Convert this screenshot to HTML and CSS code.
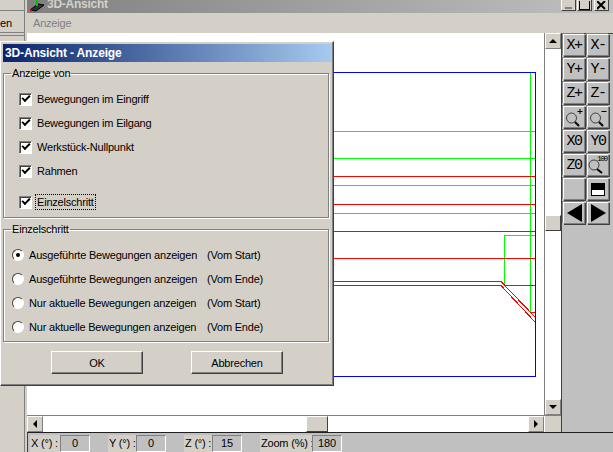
FILE: index.html

```html
<!DOCTYPE html>
<html lang="de">
<head>
  <meta charset="UTF-8" />
  <meta name="viewport" content="width=device-width, initial-scale=1.0" />
  <title>3D-Ansicht - Anzeige</title>
  <link rel="stylesheet" href="styles.css">
</head>
<body>
  <div class="desktop">
    <div class="side">
      <div class="side-menu">en</div>
    </div>

    <div class="win">
      <div class="win-title">
        <svg class="win-icon" width="16" height="12" viewBox="0 0 16 12">
          <path d="M1 10 L9 4 L15 5 L7 11 Z" fill="#303030" stroke="#000" />
          <path d="M8 0 V6" stroke="#00c000" stroke-width="2" />
          <path d="M1 10.5 H3" stroke="#f00" stroke-width="2" />
        </svg>
        <span class="win-name">3D-Ansicht</span>
        <div class="win-btns">
          <span class="win-btn"><i class="ico-min"></i></span>
          <span class="win-btn"><i class="ico-max"></i></span>
          <span class="win-btn win-close">
            <svg width="9" height="9" viewBox="0 0 9 9"><path d="M0 0 L8 8 M8 0 L0 8" stroke="#000" stroke-width="2" /></svg>
          </span>
        </div>
      </div>
      <div class="menu">Anzeige</div>

      <div class="work">
        <div class="view">
          <div class="view-top">
            <svg class="plot" width="517" height="382" viewBox="27 33 517 382" shape-rendering="crispEdges">
              <g stroke="#00ff00" fill="none">
                <path d="M27 131.5 H535" />
                <path d="M27 158.5 H535" />
                <path d="M27 185.5 H535" />
                <path d="M27 213.5 H535" />
                <path d="M530.5 72 V312" />
                <path d="M504.5 285 V235.5 H535" />
              </g>
              <g stroke="#ff0000" fill="none">
                <path d="M27 176.5 H535" />
                <path d="M27 204.5 H535" />
                <path d="M27 231.5 H535" />
                <path d="M27 258.5 H535" />
                <path d="M27 281.5 H501 L535 317" />
                <path d="M27 285.5 H501 L535 322" />
                <path d="M504 285.5 H535" />
                <path d="M530 312.5 H535" />
              </g>
              <rect x="27.5" y="72.5" width="508" height="304" fill="none" stroke="#0000ff" />
            </svg>
            <div class="vbar">
              <span class="sb-btn"><i class="arr arr-up"></i></span>
              <div class="sb-track sb-track-v"><span class="sb-thumb-v"></span></div>
              <span class="sb-btn"><i class="arr arr-down"></i></span>
            </div>
          </div>
          <div class="hbar">
            <span class="sb-btn"><i class="arr arr-left"></i></span>
            <div class="sb-track sb-track-h"><span class="sb-thumb-h"></span></div>
            <span class="sb-btn"><i class="arr arr-right"></i></span>
            <span class="sb-corner"></span>
          </div>
        </div>

        <div class="tools">
          <span class="tool">X+</span>
          <span class="tool">X-</span>
          <span class="tool">Y+</span>
          <span class="tool">Y-</span>
          <span class="tool">Z+</span>
          <span class="tool">Z-</span>
          <span class="tool">
            <svg width="20" height="20" viewBox="0 0 20 20" fill="none" stroke="#000">
              <circle cx="7.5" cy="11" r="5" stroke="#404040" />
              <path d="M11 15 L15 19" stroke-width="2" />
              <path d="M13.5 4.5 H18.5 M16 2 V7" />
            </svg>
          </span>
          <span class="tool">
            <svg width="20" height="20" viewBox="0 0 20 20" fill="none" stroke="#000">
              <circle cx="7.5" cy="11" r="5" stroke="#404040" />
              <path d="M11 15 L15 19" stroke-width="2" />
              <path d="M13.5 4.5 H18.5" />
            </svg>
          </span>
          <span class="tool">X0</span>
          <span class="tool">Y0</span>
          <span class="tool">Z0</span>
          <span class="tool">
            <svg width="20" height="20" viewBox="0 0 20 20" fill="none" stroke="#000">
              <circle cx="6" cy="10" r="5" stroke="#404040" />
              <path d="M9 14 L14 18" stroke-width="2" />
              <text class="tool-100" x="9" y="6" fill="#000" stroke="none">100</text>
            </svg>
          </span>
          <span class="tool"></span>
          <span class="tool"><i class="ico-half"></i></span>
          <span class="tool"><i class="tri tri-left"></i></span>
          <span class="tool"><i class="tri tri-right"></i></span>
        </div>
      </div>

      <div class="status">
        <span class="st-label st-x">X (°) :</span><span class="st-val">0</span>
        <span class="st-label st-y">Y (°) :</span><span class="st-val">0</span>
        <span class="st-label st-z">Z (°) :</span><span class="st-val">15</span>
        <span class="st-label st-zoom">Zoom (%) :</span><span class="st-val">180</span>
      </div>
    </div>

    <div class="dialog">
      <div class="dlg-title">3D-Ansicht - Anzeige</div>

      <fieldset class="group group-show">
        <legend>Anzeige von</legend>
        <div class="row"><span class="check"></span>Bewegungen im Eingriff</div>
        <div class="row"><span class="check"></span>Bewegungen im Eilgang</div>
        <div class="row"><span class="check"></span>Werkstück-Nullpunkt</div>
        <div class="row"><span class="check"></span>Rahmen</div>
        <div class="row row-single"><span class="check"></span><span class="focus">Einzelschritt</span></div>
      </fieldset>

      <fieldset class="group group-step">
        <legend>Einzelschritt</legend>
        <div class="row row-radio"><span class="radio radio-on"></span><span class="rlabel">Ausgeführte Bewegungen anzeigen</span>(Vom Start)</div>
        <div class="row row-radio"><span class="radio"></span><span class="rlabel">Ausgeführte Bewegungen anzeigen</span>(Vom Ende)</div>
        <div class="row row-radio"><span class="radio"></span><span class="rlabel">Nur aktuelle Bewegungen anzeigen</span>(Vom Start)</div>
        <div class="row row-radio"><span class="radio"></span><span class="rlabel">Nur aktuelle Bewegungen anzeigen</span>(Vom Ende)</div>
      </fieldset>

      <div class="dlg-btns">
        <span class="btn">OK</span>
        <span class="btn">Abbrechen</span>
      </div>
    </div>
  </div>
</body>
</html>
```

FILE: styles.css

```css
* {
  box-sizing: border-box;
}
html, body {
  margin: 0;
  height: 100%;
}
body {
  font-family: "Liberation Sans", Arial, sans-serif;
  font-size: 11px;
  letter-spacing: -0.2px;
  color: #000;
  background: #d4d0c8;
  overflow: hidden;
}
.desktop {
  position: relative;
  display: flex;
  width: 613px;
  height: 452px;
}

/* left sliver of the main window */
.side {
  width: 25px;
  margin-right: 2px;
  border-right: 1px solid #808080;
  flex: none;
}
.side-menu {
  height: 26px;
  margin-top: 10px;
  padding-top: 6px;
  border-top: 1px solid #808080;
  border-bottom: 4px double #808080;
}

/* 3D-Ansicht window */
.win {
  flex: 1;
  display: flex;
  flex-direction: column;
  min-width: 0;
}
.win-title {
  height: 13px;
  display: flex;
  align-items: flex-start;
  background: linear-gradient(to right, #808080, #c0c0c0);
  overflow: hidden;
  flex: none;
}
.win-icon {
  margin-left: 2px;
  flex: none;
}
.win-name {
  margin: -2px 0 0 2px;
  font-size: 12px;
  line-height: 12px;
  letter-spacing: -0.25px;
  font-weight: bold;
  color: #d4d0c8;
}
.win-btns {
  margin-left: auto;
  margin-right: 4px;
  display: flex;
  gap: 1px;
}
.win-btn {
  width: 15px;
  height: 11px;
  display: flex;
  align-items: flex-end;
  justify-content: center;
  background: #d4d0c8;
  border-right: 1px solid #404040;
  border-bottom: 1px solid #404040;
  border-left: 1px solid #fff;
}
.win-close {
  margin-left: 1px;
}
.win-close svg {
  display: block;
}
.ico-min {
  display: block;
  width: 7px;
  height: 2px;
  margin-bottom: 1px;
  background: #808080;
}
.ico-max {
  display: block;
  width: 11px;
  height: 9px;
  border: 1px solid #000;
  border-top: 0;
}
.menu {
  height: 20px;
  padding: 4px 0 0 6px;
  color: #808080;
  flex: none;
}
.work {
  flex: 1;
  display: flex;
  min-height: 0;
}
.view {
  flex: 1;
  display: flex;
  flex-direction: column;
  min-width: 0;
}
.view-top {
  flex: 1;
  display: flex;
  min-height: 0;
}
.plot {
  display: block;
  flex: 1;
  background: #fff;
  min-width: 0;
}

/* scrollbars */
.vbar {
  width: 17px;
  display: flex;
  flex-direction: column;
  flex: none;
  border-left: 1px solid #808080;
}
.sb-btn {
  width: 16px;
  height: 16px;
  display: flex;
  align-items: center;
  justify-content: center;
  background: #d4d0c8;
  border: 1px solid;
  border-color: #fff #808080 #808080 #fff;
  flex: none;
}
.sb-track {
  flex: 1;
  display: flex;
  background: #fff;
  min-width: 0;
  min-height: 0;
}
.sb-track-v {
  padding-top: 166px;
}
.sb-thumb-v {
  width: 16px;
  height: 16px;
  background: #d4d0c8;
  border: 1px solid;
  border-color: #fff #404040 #404040 #fff;
}
.hbar {
  height: 17px;
  display: flex;
  flex: none;
  border-top: 1px solid #808080;
}
.sb-track-h {
  padding-left: 263px;
}
.sb-thumb-h {
  width: 22px;
  height: 16px;
  background: #d4d0c8;
  border: 1px solid;
  border-color: #fff #404040 #404040 #fff;
}
.sb-corner {
  width: 17px;
  background: #d4d0c8;
  border-left: 1px solid #fff;
  flex: none;
}
.arr {
  display: block;
  width: 0;
  height: 0;
  border: 4px solid transparent;
}
.arr-up {
  border-top: 0;
  border-bottom-color: #000;
}
.arr-down {
  border-bottom: 0;
  border-top-color: #000;
}
.arr-left {
  border-left: 0;
  border-right-color: #000;
}
.arr-right {
  border-right: 0;
  border-left-color: #000;
}

/* toolbar */
.tools {
  width: 52px;
  flex: none;
  display: grid;
  grid-template-columns: 22px 22px;
  grid-auto-rows: 22px;
  gap: 2px;
  align-content: start;
  padding: 0 0 0 1px;
  background: #c0c0c0;
  border-left: 1px solid #404040;
  border-top: 1px solid #404040;
}
.tool {
  display: flex;
  align-items: center;
  justify-content: center;
  background: #c0c0c0;
  border: 1px solid;
  border-color: #fff #808080 #808080 #fff;
  box-shadow: 1px 1px 0 #404040, -1px -1px 0 #808080;
  font-family: "Liberation Mono", monospace;
  font-size: 15px;
  letter-spacing: -1.5px;
}
.tool svg {
  display: block;
}
.tool-100 {
  font-family: "Liberation Mono", monospace;
  font-size: 8px;
  letter-spacing: -1.5px;
}
.ico-half {
  display: block;
  width: 14px;
  height: 13px;
  background: linear-gradient(to bottom, #000 50%, #fff 50%);
  border: 1px solid #000;
}
.tri {
  display: block;
  width: 0;
  height: 0;
  border: 9px solid transparent;
}
.tri-left {
  border-left: 0;
  border-right: 15px solid #000;
}
.tri-right {
  border-right: 0;
  border-left: 15px solid #000;
}

/* status bar */
.status {
  height: 20px;
  display: flex;
  align-items: flex-start;
  padding: 2px 0 0 3px;
  background: #c0c0c0;
  border-top: 1px solid #202020;
  border-left: 1px solid #404040;
  flex: none;
}
.st-label {
  height: 17px;
  padding: 2px 0 0 1px;
  background: #d4d0c8;
  white-space: nowrap;
}
.st-x {
  width: 30px;
  margin-left: -1px;
}
.st-y,
.st-z {
  width: 28px;
  margin-left: 18px;
}
.st-zoom {
  width: 52px;
  margin-left: 18px;
}
.st-val {
  width: 30px;
  height: 17px;
  padding-top: 1px;
  text-align: center;
  background: #c0c0c0;
  border: 1px solid;
  border-color: #808080 #fff #fff #808080;
}

/* dialog */
.dialog {
  position: absolute;
  left: 0;
  top: 41px;
  width: 334px;
  height: 345px;
  padding: 2px 3px 0;
  display: flex;
  flex-direction: column;
  background: #d4d0c8;
  border: 1px solid;
  border-color: #fff #404040 #404040 #fff;
  box-shadow: inset -1px -1px 0 #808080;
}
.dlg-title {
  height: 18px;
  margin: 0 -2px 0 -1px;
  padding: 2px 0 0 2px;
  font-size: 12px;
  letter-spacing: -0.15px;
  font-weight: bold;
  color: #fff;
  background: linear-gradient(to right, #0a246a, #a6caf0);
  flex: none;
}
.group {
  margin: 5px 1px 0 -1px;
  padding: 0;
  min-width: 0;
  border: 1px solid #808080;
  box-shadow: 1px 1px 0 #fff, inset 1px 1px 0 #fff;
}
.group legend {
  margin-left: 7px;
  padding: 0 1px;
  line-height: 13px;
}
.group-show {
  height: 151px;
  padding-top: 7px;
}
.group-show .row {
  margin-left: 15px;
}
.group-step {
  height: 119px;
  padding-top: 7px;
}
.group-step .row {
  margin-left: 8px;
}
.row {
  display: flex;
  align-items: center;
  height: 24px;
}
.group-show .row-single {
  margin-top: 7px;
}
.check {
  position: relative;
  width: 13px;
  height: 13px;
  margin-right: 5px;
  background: #fff;
  border: 1px solid;
  border-color: #808080 #fff #fff #808080;
  box-shadow: inset 1px 1px 0 #404040;
  flex: none;
}
.check::after {
  content: "";
  position: absolute;
  left: 2px;
  top: 1px;
  width: 6px;
  height: 3px;
  border-left: 2px solid #000;
  border-bottom: 2px solid #000;
  transform: rotate(-45deg);
}
.focus {
  padding: 1px;
  margin-left: -1px;
  outline: 1px dotted #000;
}
.radio {
  position: relative;
  width: 12px;
  height: 12px;
  margin-right: 5px;
  background: #fff;
  border-radius: 50%;
  border: 1px solid;
  border-color: #404040 #fff #fff #404040;
  flex: none;
}
.radio-on::after {
  content: "";
  position: absolute;
  left: 3px;
  top: 3px;
  width: 4px;
  height: 4px;
  background: #000;
  border-radius: 50%;
}
.rlabel {
  width: 178px;
  flex: none;
}
.dlg-btns {
  display: flex;
  justify-content: center;
  gap: 48px;
  margin-top: 9px;
}
.btn {
  width: 92px;
  height: 23px;
  display: flex;
  align-items: center;
  justify-content: center;
  border: 1px solid;
  border-color: #fff #404040 #404040 #fff;
  box-shadow: inset -1px -1px 0 #808080;
}
```
